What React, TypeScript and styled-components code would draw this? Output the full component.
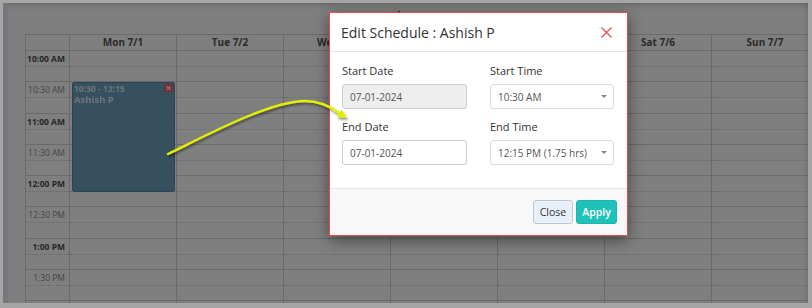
import styled, { createGlobalStyle } from "styled-components";

const DAYS = ["Mon 7/1", "Tue 7/2", "Wed 7/3", "Thu 7/4", "Fri 7/5", "Sat 7/6", "Sun 7/7"];

const SLOTS = [
    { label: "10:00 AM", hour: true },
    { label: "10:30 AM", hour: false },
    { label: "11:00 AM", hour: true },
    { label: "11:30 AM", hour: false },
    { label: "12:00 PM", hour: true },
    { label: "12:30 PM", hour: false },
    { label: "1:00 PM", hour: true },
    { label: "1:30 PM", hour: false },
    { label: "", hour: true },
];

const SLOT_H = 31.25;

const EVENT = { day: 0, start: 1, span: 3.5, time: "10:30 - 12:15", name: "Ashish P" };

const GlobalStyle = createGlobalStyle`
    html, body {
        margin: 0;
        padding: 0;
    }
    body {
        background: #a5a5a5;
        font-family: "Open Sans", "Noto Sans", sans-serif;
    }
    * {
        box-sizing: border-box;
    }
`;

export default function App() {
    return (
        <>
            <GlobalStyle />
            <Frame>
                <Page>
                    <SideEdge />
                    <Main>
                        <Toolbar>
                            <WeekTitle>July 1 - 7, 2024</WeekTitle>
                        </Toolbar>
                        <Table>
                            <HeaderRow>
                                <HeadCell $w={44} />
                                {DAYS.map((d) => (
                                    <HeadCell key={d} $w={107}>
                                        {d}
                                    </HeadCell>
                                ))}
                            </HeaderRow>
                            <Body>
                                <Column $w={44}>
                                    {SLOTS.map((s, i) => (
                                        <Slot key={i}>
                                            <TopHalf>
                                                {s.label && <TimeLabel $hour={s.hour}>{s.label}</TimeLabel>}
                                            </TopHalf>
                                        </Slot>
                                    ))}
                                </Column>
                                {DAYS.map((d, i) => (
                                    <Column key={d} $w={107}>
                                        {SLOTS.map((_s, j) => (
                                            <Slot key={j}>
                                                <TopHalf />
                                            </Slot>
                                        ))}
                                        {EVENT.day === i && (
                                            <EventBlock
                                                style={{
                                                    top: EVENT.start * SLOT_H,
                                                    height: EVENT.span * SLOT_H,
                                                }}
                                            >
                                                <EventTime>{EVENT.time}</EventTime>
                                                <EventName>{EVENT.name}</EventName>
                                                <EventRemove>×</EventRemove>
                                            </EventBlock>
                                        )}
                                    </Column>
                                ))}
                            </Body>
                        </Table>
                    </Main>
                    <Backdrop />
                    <Modal>
                        <ModalHeader>
                            <ModalTitle>Edit Schedule : Ashish P</ModalTitle>
                            <CloseIcon width="11" height="11" viewBox="0 0 11 11">
                                <path d="M0.5 0.5 L10.5 10.5 M10.5 0.5 L0.5 10.5" />
                            </CloseIcon>
                        </ModalHeader>
                        <ModalBody>
                            <Field>
                                <FieldLabel>Start Date</FieldLabel>
                                <TextBox $disabled>07-01-2024</TextBox>
                            </Field>
                            <Field>
                                <FieldLabel>Start Time</FieldLabel>
                                <SelectBox>
                                    <span>10:30 AM</span>
                                    <Caret />
                                </SelectBox>
                            </Field>
                            <Field>
                                <FieldLabel>End Date</FieldLabel>
                                <TextBox>07-01-2024</TextBox>
                            </Field>
                            <Field>
                                <FieldLabel>End Time</FieldLabel>
                                <SelectBox>
                                    <span>12:15 PM (1.75 hrs)</span>
                                    <Caret />
                                </SelectBox>
                            </Field>
                        </ModalBody>
                        <ModalFooter>
                            <Button $w={40}>Close</Button>
                            <Button $w={41} $primary>
                                Apply
                            </Button>
                        </ModalFooter>
                    </Modal>
                </Page>
                <Pointer width="812" height="308" viewBox="0 0 812 308">
                    <defs>
                        <filter id="arrowShadow" x="-10%" y="-30%" width="120%" height="160%">
                            <feDropShadow dx="1" dy="2" stdDeviation="1.2" floodColor="#000" floodOpacity="0.45" />
                        </filter>
                    </defs>
                    <g filter="url(#arrowShadow)">
                        <path
                            d="M168 154 C205 136 270 101 305 101 C321 101 331 107 339 113"
                            fill="none"
                            stroke="#e2f000"
                            strokeWidth="2.4"
                            strokeLinecap="round"
                        />
                        <polygon points="347,118 337,117 341.5,109.5" fill="#e2f000" />
                    </g>
                </Pointer>
            </Frame>
        </>
    );
}

const Frame = styled.div`
    position: relative;
    width: 812px;
    height: 308px;
    padding: 3px 4px 5px 3px;
    background: #a5a5a5;
    overflow: hidden;
`;

const Page = styled.div`
    position: relative;
    display: flex;
    height: 100%;
    background: #fff;
    overflow: hidden;
    box-shadow: inset 0 7px 6px -5px rgba(0, 0, 0, 0.2), inset -4px 0 5px -3px rgba(0, 0, 0, 0.15);
`;

const SideEdge = styled.div`
    width: 5px;
    flex-shrink: 0;
    background: #e9eef8;
`;

const Main = styled.div`
    flex: 1;
    min-width: 0;
    display: flex;
    flex-direction: column;
    padding-left: 17px;
`;

const Toolbar = styled.div`
    height: 31px;
    flex-shrink: 0;
    display: flex;
    justify-content: center;
    padding: 6px 0 0 30px;
`;

const WeekTitle = styled.div`
    font-size: 14px;
    font-weight: 600;
    line-height: 16px;
    color: #333;
`;

const Table = styled.div`
    flex-shrink: 0;
    width: 794px;
    border-left: 1px solid #d4d4d4;
    border-top: 1px solid #d4d4d4;
`;

const HeaderRow = styled.div`
    display: flex;
    height: 16px;
`;

const HeadCell = styled.div<{ $w: number }>`
    width: ${({ $w }) => $w}px;
    flex-shrink: 0;
    border-right: 1px solid #d4d4d4;
    border-bottom: 1px solid #d4d4d4;
    font-size: 10px;
    font-weight: 700;
    line-height: 15px;
    text-align: center;
    color: #555;
`;

const Body = styled.div`
    display: flex;
`;

const Column = styled.div<{ $w: number }>`
    position: relative;
    width: ${({ $w }) => $w}px;
    flex-shrink: 0;
    border-right: 1px solid #d4d4d4;
`;

const Slot = styled.div`
    height: ${SLOT_H}px;
    border-bottom: 1px solid #d4d4d4;
`;

const TopHalf = styled.div`
    height: 16px;
    border-bottom: 1px dotted #cfcfcf;
`;

const TimeLabel = styled.div<{ $hour: boolean }>`
    padding-right: 4px;
    text-align: right;
    font-size: 8.5px;
    line-height: 15px;
    font-weight: ${({ $hour }) => ($hour ? 700 : 400)};
    color: ${({ $hour }) => ($hour ? "#4d4d4d" : "#8a8a8a")};
`;

const EventBlock = styled.div`
    position: absolute;
    left: 2px;
    right: 1px;
    padding: 1px 1px;
    background: #6ca1be;
    border: 1px solid #5288a8;
    border-radius: 2px;
    color: #f2f6f9;
`;

const EventTime = styled.div`
    font-size: 8.5px;
    font-weight: 700;
    line-height: 10px;
    opacity: 0.85;
`;

const EventName = styled.div`
    font-size: 9.5px;
    font-weight: 700;
    line-height: 12px;
    opacity: 0.85;
`;

const EventRemove = styled.div`
    position: absolute;
    top: 1px;
    right: 1px;
    width: 9px;
    height: 8px;
    background: #f2596c;
    color: #fff;
    font-size: 10px;
    font-weight: 700;
    line-height: 8px;
    text-align: center;
`;

const Backdrop = styled.div`
    position: absolute;
    inset: 0;
    background: rgba(0, 0, 0, 0.5);
`;

const Modal = styled.div`
    position: absolute;
    left: 326px;
    top: 9px;
    width: 299px;
    height: 224px;
    display: flex;
    flex-direction: column;
    background: #fff;
    border: 1px solid #ef4a4a;
    box-shadow: 0 4px 14px rgba(0, 0, 0, 0.45);
`;

const ModalHeader = styled.div`
    height: 39px;
    flex-shrink: 0;
    display: flex;
    align-items: center;
    justify-content: space-between;
    padding: 0 15px 0 11px;
    border-bottom: 1px solid #e6e6e6;
`;

const ModalTitle = styled.div`
    font-size: 14px;
    color: #333;
`;

const CloseIcon = styled.svg`
    stroke: #e5524f;
    stroke-width: 1.3;
    fill: none;
`;

const ModalBody = styled.div`
    flex: 1;
    display: grid;
    grid-template-columns: 125px 124px;
    column-gap: 23px;
    row-gap: 10px;
    align-content: start;
    padding: 11px 13px 0 12px;
`;

const Field = styled.div`
    display: flex;
    flex-direction: column;
`;

const FieldLabel = styled.div`
    font-size: 11px;
    line-height: 16px;
    margin-bottom: 5px;
    color: #333;
`;

const TextBox = styled.div<{ $disabled?: boolean }>`
    height: 25px;
    display: flex;
    align-items: center;
    padding: 0 7px;
    border: 1px solid #ccc;
    border-radius: 3px;
    background: ${({ $disabled }) => ($disabled ? "#eee" : "#fff")};
    font-size: 10px;
    color: #555;
`;

const SelectBox = styled(TextBox)`
    justify-content: space-between;
    border-color: #ddd;
    padding-right: 6px;
`;

const Caret = styled.span`
    width: 0;
    height: 0;
    border-left: 3px solid transparent;
    border-right: 3px solid transparent;
    border-top: 3px solid #888;
`;

const ModalFooter = styled.div`
    height: 47px;
    flex-shrink: 0;
    display: flex;
    align-items: center;
    justify-content: flex-end;
    gap: 3px;
    padding: 0 10px;
    border-top: 1px solid #e6e6e6;
    background: #f8f8f8;
`;

const Button = styled.button<{ $primary?: boolean; $w: number }>`
    width: ${({ $w }) => $w}px;
    height: 24px;
    padding: 0;
    border-radius: 3px;
    font-family: inherit;
    font-size: 10.5px;
    font-weight: ${({ $primary }) => ($primary ? 600 : 400)};
    color: ${({ $primary }) => ($primary ? "#fff" : "#333")};
    background: ${({ $primary }) => ($primary ? "#1fc2b8" : "#e8f1fa")};
    border: 1px solid ${({ $primary }) => ($primary ? "#1bb5ab" : "#b9c6d3")};
`;

const Pointer = styled.svg`
    position: absolute;
    left: 0;
    top: 0;
    pointer-events: none;
`;
